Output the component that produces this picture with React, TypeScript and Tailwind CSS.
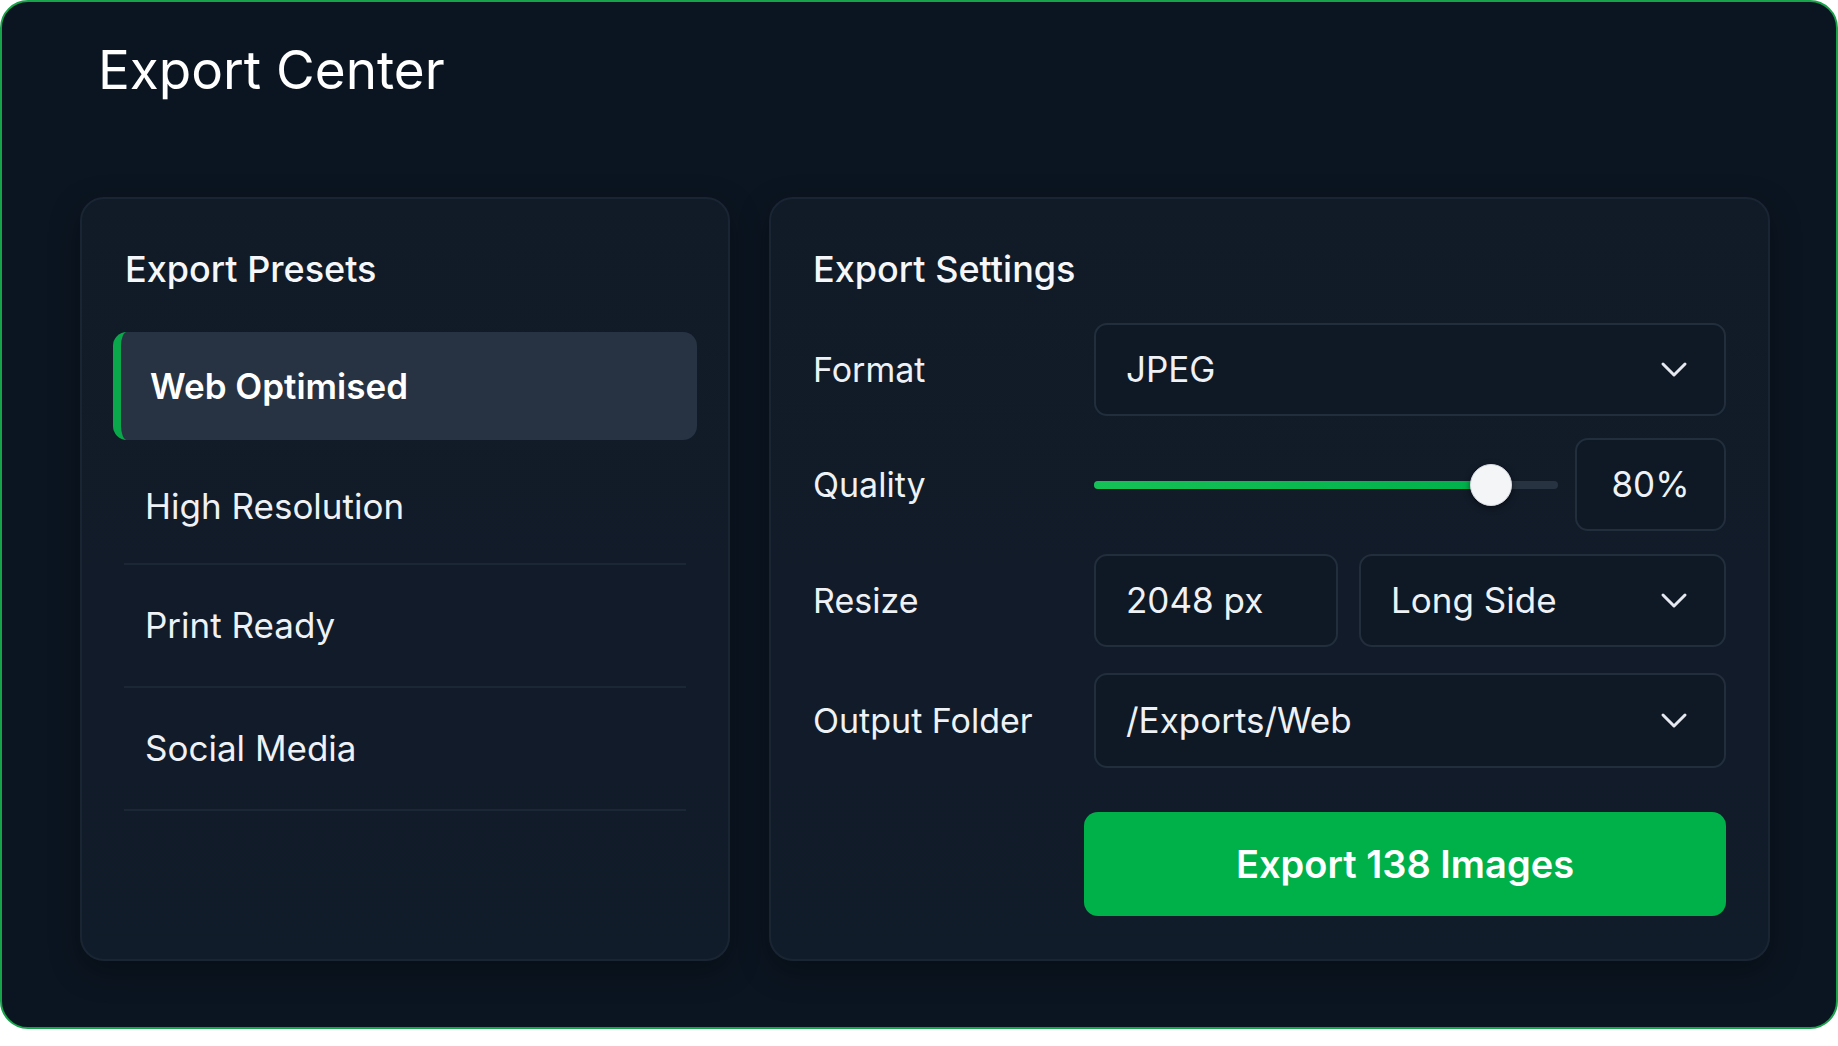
import React from 'react';

const presets = ['High Resolution', 'Print Ready', 'Social Media'];

function Chevron() {
  return (
    <svg width="28" height="18" viewBox="0 0 28 18" fill="none" className="shrink-0">
      <polyline
        points="3,3 14,14 25,3"
        stroke="#e5e9ef"
        strokeWidth="3"
        strokeLinecap="round"
        strokeLinejoin="round"
      />
    </svg>
  );
}

function SelectBox({ value, className = '' }: { value: string; className?: string }) {
  return (
    <div
      className={`flex h-[93px] items-center justify-between rounded-[13px] border-2 border-[#222e3c] bg-[#0f1926] pl-[30px] pr-[36px] ${className}`}
    >
      <span className="text-[35px] leading-none text-[#eef2f6]">{value}</span>
      <Chevron />
    </div>
  );
}

function Row({ label, className = '', children }: { label: string; className?: string; children: React.ReactNode }) {
  return (
    <div className={`flex h-[93px] items-center ${className}`}>
      <div className="w-[281px] shrink-0 text-[34px] leading-none text-[#eef2f6]">{label}</div>
      <div className="flex flex-1 items-center">{children}</div>
    </div>
  );
}

export default function App() {
  return (
    <div className="h-[1046px] w-full bg-white font-[family-name:Inter,sans-serif]">
      <div className="h-[1029px] w-full rounded-[28px] border-2 border-[#17a34a] bg-[#0b1521] pl-[78px] pr-[66px] pt-[42px]">
        {/* Header */}
        <h1 className="pl-[18px] text-[53px] font-normal leading-none text-white">Export Center</h1>

        <div className="mt-[100px] flex gap-[39px]">
          {/* Presets */}
          <section className="h-[764px] w-[650px] shrink-0 rounded-[24px] border-2 border-[#1a2533] bg-gradient-to-b from-[#111b28] to-[#111c2a] px-[42px] pt-[52px] shadow-[0_10px_30px_rgba(0,0,0,0.35)]">
            <h2 className="pl-px text-[36px] font-medium leading-none text-[#f5f7fa]">Export Presets</h2>
            <div className="mt-[45px]">
              <div className="-mx-[11px] flex h-[108px] items-center rounded-[14px] border-l-[8px] border-[#0aa84a] bg-[#273342] pl-[29px]">
                <span className="text-[35px] font-semibold leading-none text-white">Web Optimised</span>
              </div>
              <div className="mt-[2px]">
                {presets.map((p, i) => (
                  <div
                    key={p}
                    className={`flex h-[123px] items-center border-b-2 border-[#1c2735] pl-[21px] text-[35px] leading-none text-[#eef2f6] ${i === 0 ? 'pt-[8px]' : ''}`}
                  >
                    {p}
                  </div>
                ))}
              </div>
            </div>
          </section>

          {/* Settings */}
          <section className="h-[764px] flex-1 rounded-[24px] border-2 border-[#1a2533] bg-gradient-to-b from-[#111b28] to-[#111c2a] px-[42px] pt-[52px] shadow-[0_10px_30px_rgba(0,0,0,0.35)]">
            <h2 className="text-[36px] font-medium leading-none text-[#f5f7fa]">Export Settings</h2>
            <div className="mt-[36px] flex flex-col">
              <Row label="Format">
                <SelectBox value="JPEG" className="flex-1" />
              </Row>
              <Row label="Quality" className="mt-[22px]">
                <div className="relative h-[8px] w-[464px] rounded-full bg-[#283341]">
                  <div className="h-full w-[397px] rounded-full bg-gradient-to-r from-[#14c257] to-[#00b04a]" />
                  <div className="absolute left-[376px] top-1/2 h-[42px] w-[42px] -translate-y-1/2 rounded-full border border-[#d7dce2] bg-[#f4f5f7] shadow-[0_2px_6px_rgba(0,0,0,0.5)]" />
                </div>
                <div className="ml-[17px] flex h-[93px] flex-1 items-center justify-center rounded-[13px] border-2 border-[#222e3c] bg-[#0f1926] text-[35px] leading-none text-[#eef2f6]">
                  80%
                </div>
              </Row>
              <Row label="Resize" className="mt-[23px]">
                <div className="flex h-[93px] w-[244px] items-center rounded-[13px] border-2 border-[#222e3c] bg-[#0f1926] pl-[30px] text-[35px] leading-none text-[#eef2f6]">
                  2048 px
                </div>
                <SelectBox value="Long Side" className="ml-[21px] flex-1" />
              </Row>
              <Row label="Output Folder" className="mt-[27px]">
                <SelectBox value="/Exports/Web" className="h-[95px] flex-1" />
              </Row>
            </div>
            <div className="mt-[45px] pl-[271px]">
              <button className="flex h-[104px] w-full items-center justify-center rounded-[14px] bg-[#00b14a] text-[38px] font-semibold leading-none text-white">
                Export 138 Images
              </button>
            </div>
          </section>
        </div>
      </div>
    </div>
  );
}
